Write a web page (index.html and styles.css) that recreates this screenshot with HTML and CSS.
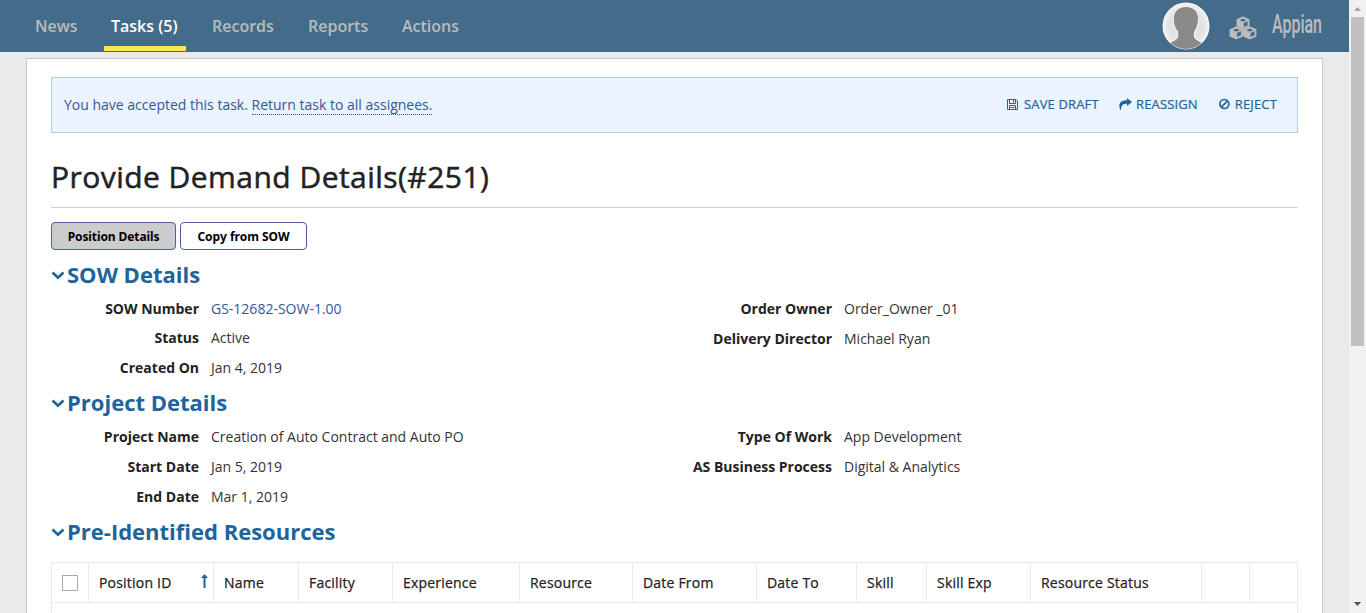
FILE: index.html
```html
<!DOCTYPE html>
<html lang="en">
<head>
<meta charset="utf-8">
<title>Provide Demand Details</title>
<link rel="stylesheet" href="styles.css">
</head>
<body>
<div class="window">
  <div class="page">
    <header class="topbar">
      <nav class="tabs">
        <a class="tab tab-news">News</a>
        <a class="tab tab-active">Tasks (5)</a>
        <a class="tab tab-records">Records</a>
        <a class="tab tab-reports">Reports</a>
        <a class="tab tab-actions">Actions</a>
      </nav>
      <svg class="avatar" width="48" height="48" viewBox="0 0 48 48">
        <defs>
          <clipPath id="disc"><circle cx="24" cy="24" r="23"/></clipPath>
          <radialGradient id="glow"><stop offset=".75" stop-color="#e3e3e3"/><stop offset="1" stop-color="#f3f3f3"/></radialGradient>
        </defs>
        <circle cx="24" cy="24" r="23.5" fill="#fff"/>
        <g clip-path="url(#disc)">
          <circle cx="24" cy="24" r="23" fill="url(#glow)"/>
          <path d="M24 4.500C31.500 4.500 36.500 9.500 36.500 16.500C36.500 22 34.500 27 32.500 29.500V35.500C34 38.500 37.500 38 41 42V48H7V42C10.500 38 14 38.500 15.700 35.500V29.500C13 27 11.300 22 11.300 16.500C11.300 9.500 16.500 4.500 24 4.500Z" fill="#8a8a8a" stroke="#f4f4f4" stroke-width="1"/>
        </g>
      </svg>
      <svg class="cubes" width="28" height="24" viewBox="0 0 28 24">
        <g fill="#436b8a" stroke="#bcbcbc" stroke-width="1.900" stroke-linejoin="round">
          <path d="M14 1.500L19.500 3.800V9.800L14 12.300L8.500 9.800V3.800Z"/>
          <path d="M7.200 11.500L13 13.800V19.800L7.200 22.300L1.500 19.800V13.800Z"/>
          <path d="M20.800 11.500L26.500 13.800V19.800L20.800 22.300L15 19.800V13.800Z"/>
        </g>
        <g fill="#bcbcbc">
          <path d="M8.500 4L14 6.500V12.300L8.500 9.800Z"/>
          <path d="M1.500 14L7.200 16.500V22.300L1.500 19.800Z"/>
          <path d="M15 14L20.800 16.500V22.300L15 19.800Z"/>
        </g>
        <path d="M8.500 4L14 6.500L19.500 4M14 6.500V12M1.500 14L7.200 16.500L13 14M7.200 16.500V22M15 14L20.800 16.500L26.500 14M20.800 16.500V22" fill="none" stroke="#bcbcbc" stroke-width="1.500"/>
      </svg>
      <svg class="brand" width="54" height="32" viewBox="0 0 54 32">
        <text class="brand-text" x="1" y="22.500" textLength="50" lengthAdjust="spacingAndGlyphs">Appian</text>
      </svg>
    </header>

    <main class="sheet">
      <section class="banner">
        <p class="banner-text">You have accepted this task. <a class="banner-link">Return task to all assignees.</a></p>
        <div class="banner-actions">
          <a class="action action-save">
            <svg width="11" height="11" viewBox="0 0 11 11" fill="none" stroke="#1d659c" stroke-width="1"><path d="M.5.5H9L10.500 2V10.500H.5Z"/><path d="M2.500 .5V4.500H8.500V.5M2.500 10.500V6.500H8.500V10.500M3.500 8.500H7.500M6.500 1V3.500"/></svg>
            <span>SAVE DRAFT</span></a>
          <a class="action action-reassign">
            <svg width="13" height="12" viewBox="0 0 13 12" fill="#1d659c"><path d="M8 0L13 4L8 8V5.800C4.500 5.800 2.300 6.500 1.900 12H1.200C-.8 6.500 .5 2.200 8 2.200Z"/></svg>
            <span>REASSIGN</span></a>
          <a class="action action-reject">
            <svg width="11" height="12" viewBox="0 0 11 12" fill="none" stroke="#1d659c" stroke-width="1.700"><circle cx="5.500" cy="6" r="4.600"/><path d="M2.300 9.200L8.700 2.800"/></svg>
            <span>REJECT</span></a>
        </div>
      </section>

      <h1 class="title">Provide Demand Details(#251)</h1>

      <div class="switch">
        <button class="pill pill-on"><span>Position Details</span></button>
        <button class="pill"><span>Copy from SOW</span></button>
      </div>

      <h2 class="section"><svg class="chevron" width="14" height="9" viewBox="0 0 14 9"><path d="M1.500 1.500L7 6.700L12.500 1.500"/></svg><span>SOW Details</span></h2>
      <div class="fields">
        <dl class="column">
          <dt>SOW Number</dt><dd class="link">GS-12682-SOW-1.00</dd>
          <dt class="raised">Status</dt><dd class="raised">Active</dd>
          <dt class="raised">Created On</dt><dd class="raised">Jan 4, 2019</dd>
        </dl>
        <dl class="column">
          <dt>Order Owner</dt><dd>Order_Owner _01</dd>
          <dt>Delivery Director</dt><dd>Michael Ryan</dd>
        </dl>
      </div>

      <h2 class="section"><svg class="chevron" width="14" height="9" viewBox="0 0 14 9"><path d="M1.500 1.500L7 6.700L12.500 1.500"/></svg><span>Project Details</span></h2>
      <div class="fields fields-project">
        <dl class="column">
          <dt>Project Name</dt><dd>Creation of Auto Contract and Auto PO</dd>
          <dt>Start Date</dt><dd>Jan 5, 2019</dd>
          <dt>End Date</dt><dd>Mar 1, 2019</dd>
        </dl>
        <dl class="column">
          <dt>Type Of Work</dt><dd>App Development</dd>
          <dt>AS Business Process</dt><dd>Digital &amp; Analytics</dd>
        </dl>
      </div>

      <h2 class="section"><svg class="chevron" width="14" height="9" viewBox="0 0 14 9"><path d="M1.500 1.500L7 6.700L12.500 1.500"/></svg><span>Pre-Identified Resources</span></h2>
      <div class="grid">
        <div class="grid-head">
          <div class="cell cell-check"><span class="checkbox"></span></div>
          <div class="cell cell-sorted"><span>Position ID</span><svg width="7" height="14" viewBox="0 0 7 14"><path d="M3.500 0L7 4H4.500V14H2.500V4H0Z" fill="#1d659c"/></svg></div>
          <div class="cell">Name</div>
          <div class="cell">Facility</div>
          <div class="cell">Experience</div>
          <div class="cell">Resource</div>
          <div class="cell">Date From</div>
          <div class="cell">Date To</div>
          <div class="cell">Skill</div>
          <div class="cell">Skill Exp</div>
          <div class="cell">Resource Status</div>
          <div class="cell"></div>
          <div class="cell"></div>
        </div>
        <div class="grid-body"></div>
      </div>
    </main>
  </div>

  <div class="scrollbar">
    <svg width="17" height="17" viewBox="0 0 17 17"><path d="M5 11L8.500 7L12 11Z" fill="#a3a3a3"/></svg>
    <div class="thumb"></div>
    <svg class="scroll-down" width="17" height="17" viewBox="0 0 17 17"><path d="M5 6L8.500 10L12 6Z" fill="#505050"/></svg>
  </div>
</div>
</body>
</html>
```
FILE: styles.css
```css
* { box-sizing: border-box; }

body {
  margin: 0;
  font-family: "Open Sans", sans-serif;
  font-size: 14px;
  color: #222;
  background: #eaeaea;
  overflow: hidden;
}

.window { display: flex; height: 613px; overflow: hidden; }
.page { width: 1349px; height: 613px; overflow: hidden; background: #eaeaea; }

.topbar {
  display: flex;
  height: 52px;
  background: #436b8a;
}

.tabs { display: flex; flex: 1; padding-left: 27px; }
.tab {
  height: 51px;
  padding: 0 8px;
  font-size: 16px;
  line-height: 52px;
  font-weight: 600;
  color: #bcbcbc;
  white-space: nowrap;
  border-bottom: 5px solid transparent;
}
.tab-news { width: 59px; margin-right: 18px; }
.tab-active { width: 82px; padding: 0 7px; color: #fff; border-bottom-color: #f9e553; }
.tab-records { width: 78px; margin-left: 18px; }
.tab-reports { width: 76px; margin-left: 18px; }
.tab-actions { margin-left: 18px; }

.avatar { margin: 2px 19px 0 0; }
.cubes { margin: 16px 14px 0 0; }
.brand { margin: 10px 24px 0 0; overflow: visible; }
.brand-text {
  font-family: Roboto, sans-serif;
  font-size: 25px;
  font-weight: 500;
  fill: #bcbcbc;
}

.sheet {
  width: 1297px;
  height: 640px;
  margin: 6px 0 0 26px;
  padding: 18px 24px 0;
  background: #fff;
  border: 1px solid #c8c8c8;
}

.banner {
  display: flex;
  justify-content: space-between;
  height: 56px;
  padding: 0 20px 0 12px;
  background: #ebf3ff;
  border: 1px solid #b5cdec;
  color: #355892;
}
.banner-text { margin: 0; line-height: 54px; }
.banner-link { border-bottom: 1px dotted #355892; }
.banner-actions { display: flex; align-items: center; height: 52px; }
.action {
  display: flex;
  align-items: center;
  font-size: 13px;
  font-weight: 500;
  letter-spacing: .15px;
  color: #1d659c;
  white-space: nowrap;
  -webkit-text-stroke: .2px #1d659c;
}
.action-save { width: 112px; gap: 6px; }
.action-reassign { width: 100px; gap: 4px; }
.action-reject { width: 58px; gap: 5px; }

.title {
  height: 75px;
  margin: 0 0 14px;
  padding-top: 22px;
  font-size: 30px;
  line-height: 44px;
  font-weight: 500;
  letter-spacing: .46px;
  -webkit-text-stroke: .5px #222;
  border-bottom: 1px solid #d0d0d0;
}

.switch { display: flex; gap: 4px; margin-bottom: 8px; }
.pill {
  width: 125px;
  height: 28px;
  padding: 0;
  font-family: "Noto Sans", sans-serif;
  font-size: 12px;
  font-weight: 700;
  letter-spacing: -.1px;
  color: #000;
  background: #fff;
  border: 1px solid #4c629b;
  border-radius: 4px;
}
.pill + .pill { width: 127px; letter-spacing: 0; }
.pill-on { background: #ccc; }

.section {
  display: flex;
  align-items: center;
  gap: 2px;
  height: 32px;
  margin: 0;
  font-size: 22px;
  line-height: 32px;
  font-weight: 700;
  color: #1d659c;
  white-space: nowrap;
}
.chevron { fill: none; stroke: #1d659c; stroke-width: 2.700; margin-top: 3px; }

.fields { display: flex; height: 96px; padding-top: 4px; }
.fields-project { height: 97px; }
.column {
  display: grid;
  flex: none;
  grid-template-columns: 148px 1fr;
  grid-auto-rows: 30px;
  column-gap: 12px;
  width: 633px;
  margin: 0;
  line-height: 30px;
  white-space: nowrap;
}
.column + .column { width: 600px; }
.column dt { font-weight: 700; text-align: right; }
.column dd { margin: 0; color: #333; }
.column .raised { line-height: 28px; }
.column .link { color: #355892; }

.grid { margin-top: 15px; border: 1px solid #eaeaea; height: 80px; }
.grid-head {
  display: grid;
  grid-template-columns: 37px 125px 85px 94px 127px 113px 124px 100px 70px 104px 171px 48px 47px;
  height: 40px;
  border-bottom: 1px solid #eaeaea;
}
.cell {
  padding-left: 10px;
  line-height: 39px;
  letter-spacing: .2px;
  -webkit-text-stroke: .25px #222;
  border-right: 1px solid #eaeaea;
  white-space: nowrap;
}
.cell:last-child { border-right: 0; }
.cell-check { display: flex; align-items: center; }
.checkbox { width: 16px; height: 16px; border: 1px solid #aaa; background: #fff; }
.cell-sorted { display: flex; justify-content: space-between; padding-right: 5px; }
.cell-sorted svg { margin-top: 11px; }

.scrollbar {
  display: flex;
  flex-direction: column;
  width: 17px;
  height: 613px;
  background: #f1f1f1;
}
.thumb { width: 13px; height: 329px; margin-left: 2px; background: #c1c1c1; }
.scroll-down { margin-top: auto; }
```
